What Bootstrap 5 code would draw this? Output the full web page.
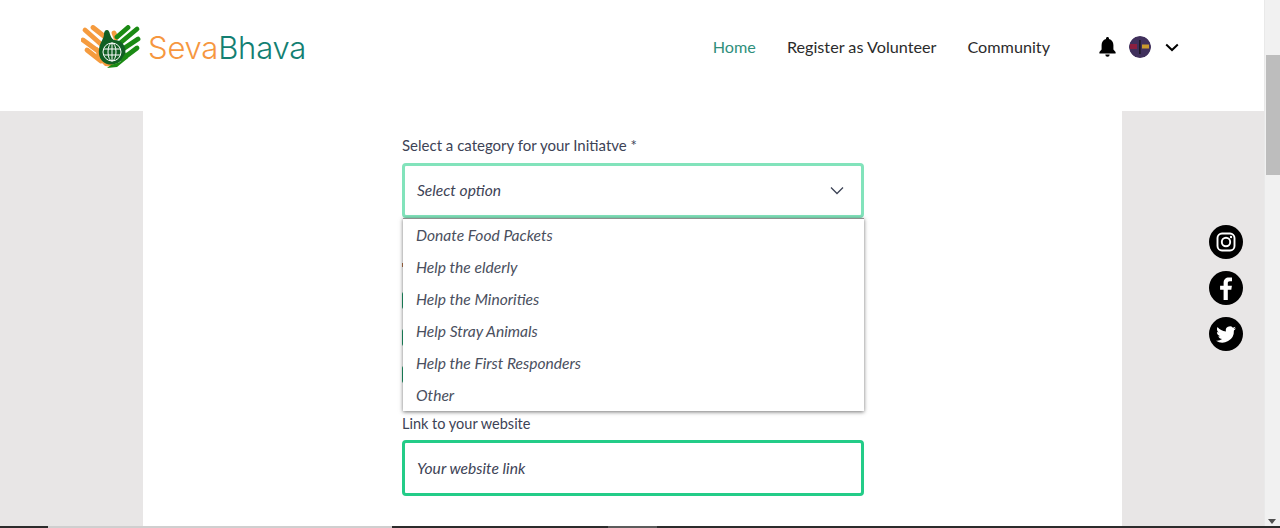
<!DOCTYPE html>
<html lang="en">
<head>
<meta charset="utf-8">
<title>SevaBhava</title>
<link href="https://cdn.jsdelivr.net/npm/bootstrap@5.3.0/dist/css/bootstrap.min.css" rel="stylesheet">
<style>
html,body{height:528px;overflow:hidden;margin:0;background:#fff}
body{font-family:"Lato","Liberation Sans",sans-serif;color:#3d4356}
.sb-shell{height:526px;position:relative}
.sb-page{flex:1 1 auto;min-width:0;background:#e8e6e6}
.sb-top.navbar{height:111px;background:#fff;padding:0 85px 17px 81px}
.sb-word{font-family:"Inter",sans-serif;font-weight:300;font-size:31px;line-height:1;margin-left:7px;letter-spacing:-.2px}
.sb-or{color:#f6973f}.sb-te{color:#137f72}
.sb-top .nav-link{font-size:16.2px;color:#2b2b2b;padding:0;line-height:22px}
.sb-top .nav-link.active{color:#2f8f7c}
.sb-nav{gap:31px;margin-right:49px}
.sb-avatar{width:22px;height:22px;border-radius:50%;margin:0 14px 0 13px}
.sb-sheet{width:979px;height:415px;margin-left:143px;background:#fff;padding-top:24px}
.sb-form{width:462px;margin-left:259px;position:relative}
.sb-label{font-size:15px;line-height:20px;color:#3d4356;margin:0 0 8px}
.sb-select{height:55px;border:3px solid #82e3bb;border-radius:4px;padding:0 12px;font-style:italic;font-size:15.6px;color:#3d4356;background:#fff}
.sb-menu.dropdown-menu{position:absolute;top:83px;left:1px;width:461px;margin:0;padding:0;border:0;border-top:1px solid #8f8f8f;border-radius:0;box-shadow:0 1px 4px rgba(0,0,0,.55);background:#fff;z-index:3;height:193px}
.sb-menu .dropdown-item{height:32px;line-height:32px;padding:0 13px;font-style:italic;font-size:15.6px;color:#4a4f5e}
.sb-hidden{height:196px;padding-top:45px}
.sb-tick{width:12px;height:4px;background:#b5744a;margin-bottom:25px}
.sb-check{width:12px;height:17px;background:#1f9a6a;border-radius:2px;margin-bottom:20px}
.sb-input{height:56px;border:3px solid #23cc88;border-radius:4px;padding:0 12px;font-style:italic;font-size:15.6px;line-height:50px;color:#3d4356;background:#fff}
.sb-label2{font-size:14.500px;line-height:20px;margin:0 0 6px}
.sb-social{right:37px;top:225px;gap:12px}
.sb-social svg{display:block}
.sb-scroll{width:16px;flex:0 0 16px;background:#f1f1f1;border-left:1px solid #e9e9e9;position:relative}
.sb-thumb{position:absolute;top:55px;left:1px;width:14px;height:120px;background:#bdbdbd}
.sb-arrow{position:absolute;left:3px;bottom:2px;width:0;height:0;border:4px solid transparent;border-top:5px solid #505050;border-bottom:0}
.sb-strip{height:2px;background:#2c2c2c}
.sb-strip-a{margin-left:48px;width:344px;height:2px;background:#cfcfcf}
.sb-strip-b{margin-left:216px;width:49px;height:2px;background:#5c5c5c}
.sb-chev{margin-right:5px}
</style>
</head>
<body>
<div class="sb-shell d-flex">
  <div class="sb-page">
    <nav class="sb-top navbar d-flex align-items-center justify-content-between flex-nowrap">
      <a class="d-flex align-items-center text-decoration-none" href="#">
        <svg width="60" height="44" viewBox="0 0 60 44" aria-hidden="true">
          <g stroke="#f59b3e" stroke-width="4.800" stroke-linecap="round" fill="none">
            <path d="M4 5 22 21"/><path d="M12 2.500 24 12"/><path d="M2 15 17 26"/><path d="M6 25 20 36"/><path d="M33 8 35 13"/>
          </g>
          <path d="M16 22 30 36 33 42 24 41 15 32Z" fill="#f59b3e"/>
          <g stroke="#1b8a14" stroke-width="4.800" stroke-linecap="round" fill="none">
            <path d="M56 4 38 19"/><path d="M47 2.500 36 12"/><path d="M57 14 42 24"/><path d="M56 23 44 32"/>
          </g>
          <path d="M26 5C29.500 5 28 12 33 15 41 15 46 21 44 30 41 38 32 41 26 39 20 37 17 31 18 24 19 17 23 14 23 9 23 7 24 5 26 5Z" fill="#115f24"/>
          <path d="M45 27 39 37 30 40 26 43 36 42 47 33Z" fill="#1b8a14"/>
          <g fill="none" stroke="#fff" stroke-width="1">
            <circle cx="31" cy="27" r="9"/><ellipse cx="31" cy="27" rx="4" ry="9"/>
            <path d="M31 18V36M22.800 24H39.200M22.800 30H39.200"/>
          </g>
        </svg>
        <span class="sb-word"><span class="sb-or">Seva</span><span class="sb-te">Bhava</span></span>
      </a>
      <div class="d-flex align-items-center">
        <ul class="nav sb-nav flex-nowrap">
          <li class="nav-item"><a class="nav-link active" href="#">Home</a></li>
          <li class="nav-item"><a class="nav-link" href="#">Register as Volunteer</a></li>
          <li class="nav-item"><a class="nav-link" href="#">Community</a></li>
        </ul>
        <svg width="17" height="20" viewBox="0 0 17 20" aria-hidden="true"><path d="M8.500 0C7.600 0 7 .7 7 1.600v.5C4.200 2.800 2.600 5.200 2.600 8v4.600L.4 15v1.400h16.200V15l-2.200-2.400V8c0-2.800-1.600-5.200-4.400-5.900v-.5C10 .7 9.400 0 8.500 0ZM6.300 17.600a2.200 2.200 0 0 0 4.400 0Z" fill="#000"/></svg>
        <svg class="sb-avatar" viewBox="0 0 22 22" aria-hidden="true"><circle cx="11" cy="11" r="11" fill="#40305c"/><rect x="1" y="8" width="7" height="5" fill="#8b1f3f"/><rect x="13" y="8.500" width="7" height="4" fill="#c99a2e"/><rect x="10.300" y="4" width="1.200" height="14" fill="#111"/></svg>
        <svg width="14" height="9" viewBox="0 0 14 9" aria-hidden="true"><path d="M1.200 1.500 7 7l5.800-5.500" fill="none" stroke="#000" stroke-width="2"/></svg>
      </div>
    </nav>
    <div class="sb-sheet">
      <form class="sb-form" onsubmit="return false">
        <label class="sb-label d-block">Select a category for your Initiatve *</label>
        <div class="sb-select d-flex align-items-center justify-content-between">
          <span>Select option</span>
          <svg class="sb-chev" width="14" height="9" viewBox="0 0 14 9" aria-hidden="true"><path d="M1 1.500 7 7.500l6-6" fill="none" stroke="#3d4356" stroke-width="1.300"/></svg>
        </div>
        <ul class="dropdown-menu show sb-menu list-unstyled">
          <li><a class="dropdown-item" href="#">Donate Food Packets</a></li>
          <li><a class="dropdown-item" href="#">Help the elderly</a></li>
          <li><a class="dropdown-item" href="#">Help the Minorities</a></li>
          <li><a class="dropdown-item" href="#">Help Stray Animals</a></li>
          <li><a class="dropdown-item" href="#">Help the First Responders</a></li>
          <li><a class="dropdown-item" href="#">Other</a></li>
        </ul>
        <div class="sb-hidden">
          <div class="sb-tick"></div>
          <div class="sb-check"></div>
          <div class="sb-check"></div>
          <div class="sb-check"></div>
        </div>
        <label class="sb-label2 d-block">Link to your website</label>
        <div class="sb-input">Your website link</div>
      </form>
    </div>
  </div>
  <div class="sb-scroll"><div class="sb-thumb"></div><div class="sb-arrow"></div></div>
  <div class="sb-social position-absolute d-flex flex-column">
    <a href="#" aria-label="Instagram"><svg width="34" height="34" viewBox="0 0 34 34"><circle cx="17" cy="17" r="17" fill="#000"/><rect x="8.500" y="8.500" width="17" height="17" rx="4.500" fill="none" stroke="#fff" stroke-width="1.900"/><circle cx="17" cy="17" r="4.200" fill="none" stroke="#fff" stroke-width="1.900"/><circle cx="22" cy="12" r="1.200" fill="#fff"/></svg></a>
    <a href="#" aria-label="Facebook"><svg width="34" height="34" viewBox="0 0 34 34"><circle cx="17" cy="17" r="17" fill="#000"/><path d="M18.800 29V18.700h3.500l.6-4h-4.100v-2.500c0-1.200.4-2 2-2h2.200V6.600c-.4 0-1.700-.2-3.200-.2-3.100 0-5.200 1.900-5.200 5.400v2.900h-3.500v4h3.500V29Z" fill="#fff"/></svg></a>
    <a href="#" aria-label="Twitter"><svg width="34" height="34" viewBox="0 0 34 34"><circle cx="17" cy="17" r="17" fill="#000"/><path d="M27 11.300c-.7.300-1.500.5-2.300.6.800-.5 1.500-1.300 1.800-2.200-.8.500-1.700.8-2.600 1a4.100 4.100 0 0 0-7 3.700c-3.400-.2-6.400-1.800-8.400-4.300-1.100 1.900-.5 4.300 1.300 5.500-.7 0-1.300-.2-1.900-.5 0 2 1.400 3.700 3.300 4.100-.6.200-1.200.2-1.900.1.500 1.600 2 2.800 3.800 2.800A8.300 8.300 0 0 1 7 23.800 11.600 11.600 0 0 0 24.900 13.500c.8-.6 1.500-1.300 2.100-2.200Z" fill="#fff"/></svg></a>
  </div>
</div>
<div class="sb-strip d-flex"><div class="sb-strip-a"></div><div class="sb-strip-b"></div></div>
</body>
</html>
